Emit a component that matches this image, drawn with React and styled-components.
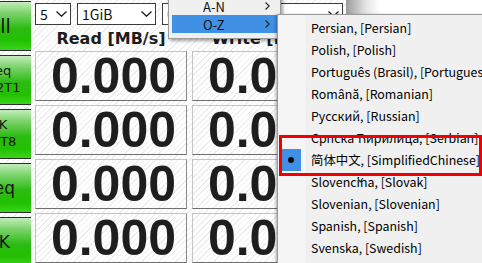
import React from 'react';
import styled, { createGlobalStyle } from 'styled-components';

const GlobalStyle = createGlobalStyle`
  html, body {
    margin: 0;
    padding: 0;
  }
  body {
    width: 482px;
    height: 263px;
    overflow: hidden;
    background: #ffffff;
    font-family: 'Noto Sans CJK SC', 'Noto Sans', sans-serif;
  }
`;

const hatch = `repeating-linear-gradient(-45deg, #ffffff 0px, #ffffff 3px, #ededed 3px, #ededed 4px)`;

// Screen: the benchmark window plus the desktop behind it
const Screen = styled.div`
  position: relative;
  width: 482px;
  height: 263px;
  overflow: hidden;
  display: flex;
  background: #ffffff;
`;

const Window = styled.div`
  width: 346px;
  flex-shrink: 0;
  display: flex;
  gap: 4px;
  background: ${hatch};
`;

const WindowShadow = styled.div`
  width: 34px;
  flex-shrink: 0;
  background: linear-gradient(to right, #9c9c9c, #e6e6e6 60%, #ffffff);
`;

const SideColumn = styled.div`
  width: 31px;
  flex-shrink: 0;
  overflow: hidden;
  display: flex;
  flex-direction: column;
  gap: 4px;
  padding-top: 1px;
`;

const TestButton = styled.div`
  flex-shrink: 0;
  width: 70px;
  height: 50px;
  margin-left: -36px;
  box-sizing: border-box;
  border: 1px solid #2e2e2e;
  background: linear-gradient(to bottom, #c4eebb 0%, #7fd470 22%, #2cbb12 55%, #22c000 80%, #3ad41a 100%);
  display: flex;
  flex-direction: column;
  align-items: center;
  justify-content: center;
  font-family: 'DejaVu Sans', sans-serif;
  font-size: ${(p) => p.$size}px;
  line-height: ${(p) => (p.$size > 15 ? 1.1 : 1.3)};
  color: #161616;
  text-align: center;
`;

const Panel = styled.div`
  display: flex;
  flex-direction: column;
`;

const SelectRow = styled.div`
  display: flex;
  gap: 6px;
  margin-top: 3px;
  height: 22px;
`;

const Select = styled.div`
  width: ${(p) => p.$width}px;
  height: 22px;
  box-sizing: border-box;
  border: 1px solid #3c3c3c;
  background: #ffffff;
  display: flex;
  align-items: center;
  justify-content: space-between;
  padding: 0 3px 0 4px;
  font-size: 14px;
  color: #111;
  white-space: nowrap;
  overflow: hidden;
`;

const HeaderRow = styled.div`
  display: grid;
  grid-template-columns: 152px 152px;
  column-gap: 5px;
  height: 30px;
  align-items: center;
`;

const Header = styled.div`
  text-align: center;
  font-family: 'DejaVu Sans', sans-serif;
  font-weight: bold;
  font-size: 16px;
  color: #1c1c1c;
  white-space: nowrap;
`;

const Grid = styled.div`
  display: grid;
  grid-template-columns: 152px 152px;
  grid-auto-rows: 50px;
  column-gap: 5px;
  row-gap: 4px;
`;

const Cell = styled.div`
  box-sizing: border-box;
  border: 1px solid #c4c4c4;
  border-right-color: #8a8a8a;
  border-bottom-color: #6e6e6e;
  background: ${hatch};
  display: flex;
  align-items: center;
  justify-content: flex-end;
  padding-right: 10px;
  font-family: 'Liberation Sans', Arial, sans-serif;
  font-weight: bold;
  font-size: 50px;
  color: #1e1e1e;
  line-height: 1;
`;

// Context menus
const ParentMenu = styled.div`
  position: absolute;
  left: 168px;
  top: -7px;
  width: 113px;
  box-sizing: border-box;
  border: 1px solid #9a9a9a;
  background: #f0f0f0;
  padding: 3px 2px 5px 3px;
  box-shadow: 2px 2px 3px rgba(0, 0, 0, 0.35);
  z-index: 2;
`;

const MenuRow = styled.div`
  height: 18px;
  display: flex;
  align-items: center;
  justify-content: space-between;
  padding: 0 8px 0 31px;
  background: ${(p) => (p.$active ? '#4090e6' : 'transparent')};
  font-size: 13px;
  color: #111;
`;

const SubMenu = styled.div`
  position: absolute;
  left: 277px;
  top: 14px;
  width: 240px;
  height: 270px;
  box-sizing: border-box;
  border: 1px solid #9a9a9a;
  padding-top: 2px;
  background: linear-gradient(to right, #f5f5f5 0px, #f5f5f5 28px, #ececec 28px, #ececec 29px, #f0f0f0 29px);
  box-shadow: -1px 1px 3px rgba(0, 0, 0, 0.35);
  z-index: 3;
`;

const SubItem = styled.div`
  height: 22px;
  display: flex;
  align-items: center;
  font-size: 12.4px;
  color: #000;
  white-space: nowrap;
`;

const Gutter = styled.div`
  width: 20px;
  height: 22px;
  margin-left: 3px;
  margin-right: 10px;
  display: flex;
  align-items: center;
  justify-content: center;
  background: ${(p) => (p.$checked ? '#4090e6' : 'transparent')};
`;

const Dot = styled.div`
  width: 6px;
  height: 6px;
  border-radius: 50%;
  background: #0a0a0a;
`;

const Callout = styled.div`
  position: absolute;
  left: 279px;
  top: 135px;
  width: 203px;
  height: 41px;
  box-sizing: border-box;
  border: 3px solid #f00000;
  z-index: 4;
  pointer-events: none;
`;

const Chevron = ({ dir = 'down' }) =>
  dir === 'down' ? (
    <svg width="11" height="6" viewBox="0 0 11 6">
      <polyline points="0.5,0.5 5.5,5.2 10.5,0.5" fill="none" stroke="#1a1a1a" strokeWidth="1.3" />
    </svg>
  ) : (
    <svg width="5" height="8" viewBox="0 0 5 8">
      <polyline points="0.5,0.5 4.2,4 0.5,7.5" fill="none" stroke="#222" strokeWidth="1.1" />
    </svg>
  );

const buttons = [
  { label: ['All'], size: 19 },
  { label: ['Seq', 'Q32T1'], size: 13 },
  { label: ['4K', 'Q8T8'], size: 13 },
  { label: ['Seq'], size: 17 },
  { label: ['4K'], size: 17 },
];

const languages = [
  'Persian, [Persian]',
  'Polish, [Polish]',
  'Português (Brasil), [Portuguese]',
  'Română, [Romanian]',
  'Русский, [Russian]',
  'Српска Ћирилица, [Serbian]',
  '简体中文, [SimplifiedChinese]',
  'Slovenčina, [Slovak]',
  'Slovenian, [Slovenian]',
  'Spanish, [Spanish]',
  'Svenska, [Swedish]',
  'Ślōnskŏ, [Silesian]',
];

export default function App() {
  return (
    <>
      <GlobalStyle />
      <Screen>
        <Window>
          <SideColumn>
            {buttons.map((b, i) => (
              <TestButton key={i} $size={b.size}>
                {b.label.map((l) => (
                  <span key={l}>{l}</span>
                ))}
              </TestButton>
            ))}
          </SideColumn>
          <Panel>
            <SelectRow>
              <Select $width={36}>
                5 <Chevron />
              </Select>
              <Select $width={79}>
                1GiB <Chevron />
              </Select>
              <Select $width={181}>
                C: 0% (0/238GiB) <Chevron />
              </Select>
            </SelectRow>
            <HeaderRow>
              <Header>Read [MB/s]</Header>
              <Header>Write [MB/s]</Header>
            </HeaderRow>
            <Grid>
              {Array.from({ length: 8 }).map((_, i) => (
                <Cell key={i}>0.000</Cell>
              ))}
            </Grid>
          </Panel>
        </Window>
        <WindowShadow />

        <ParentMenu>
          <MenuRow>
            A-N <Chevron dir="right" />
          </MenuRow>
          <MenuRow $active>
            O-Z <Chevron dir="right" />
          </MenuRow>
        </ParentMenu>

        <SubMenu>
          {languages.map((lang) => {
            const checked = lang.startsWith('简体');
            return (
              <SubItem key={lang}>
                <Gutter $checked={checked}>{checked && <Dot />}</Gutter>
                {lang}
              </SubItem>
            );
          })}
        </SubMenu>

        <Callout />
      </Screen>
    </>
  );
}
